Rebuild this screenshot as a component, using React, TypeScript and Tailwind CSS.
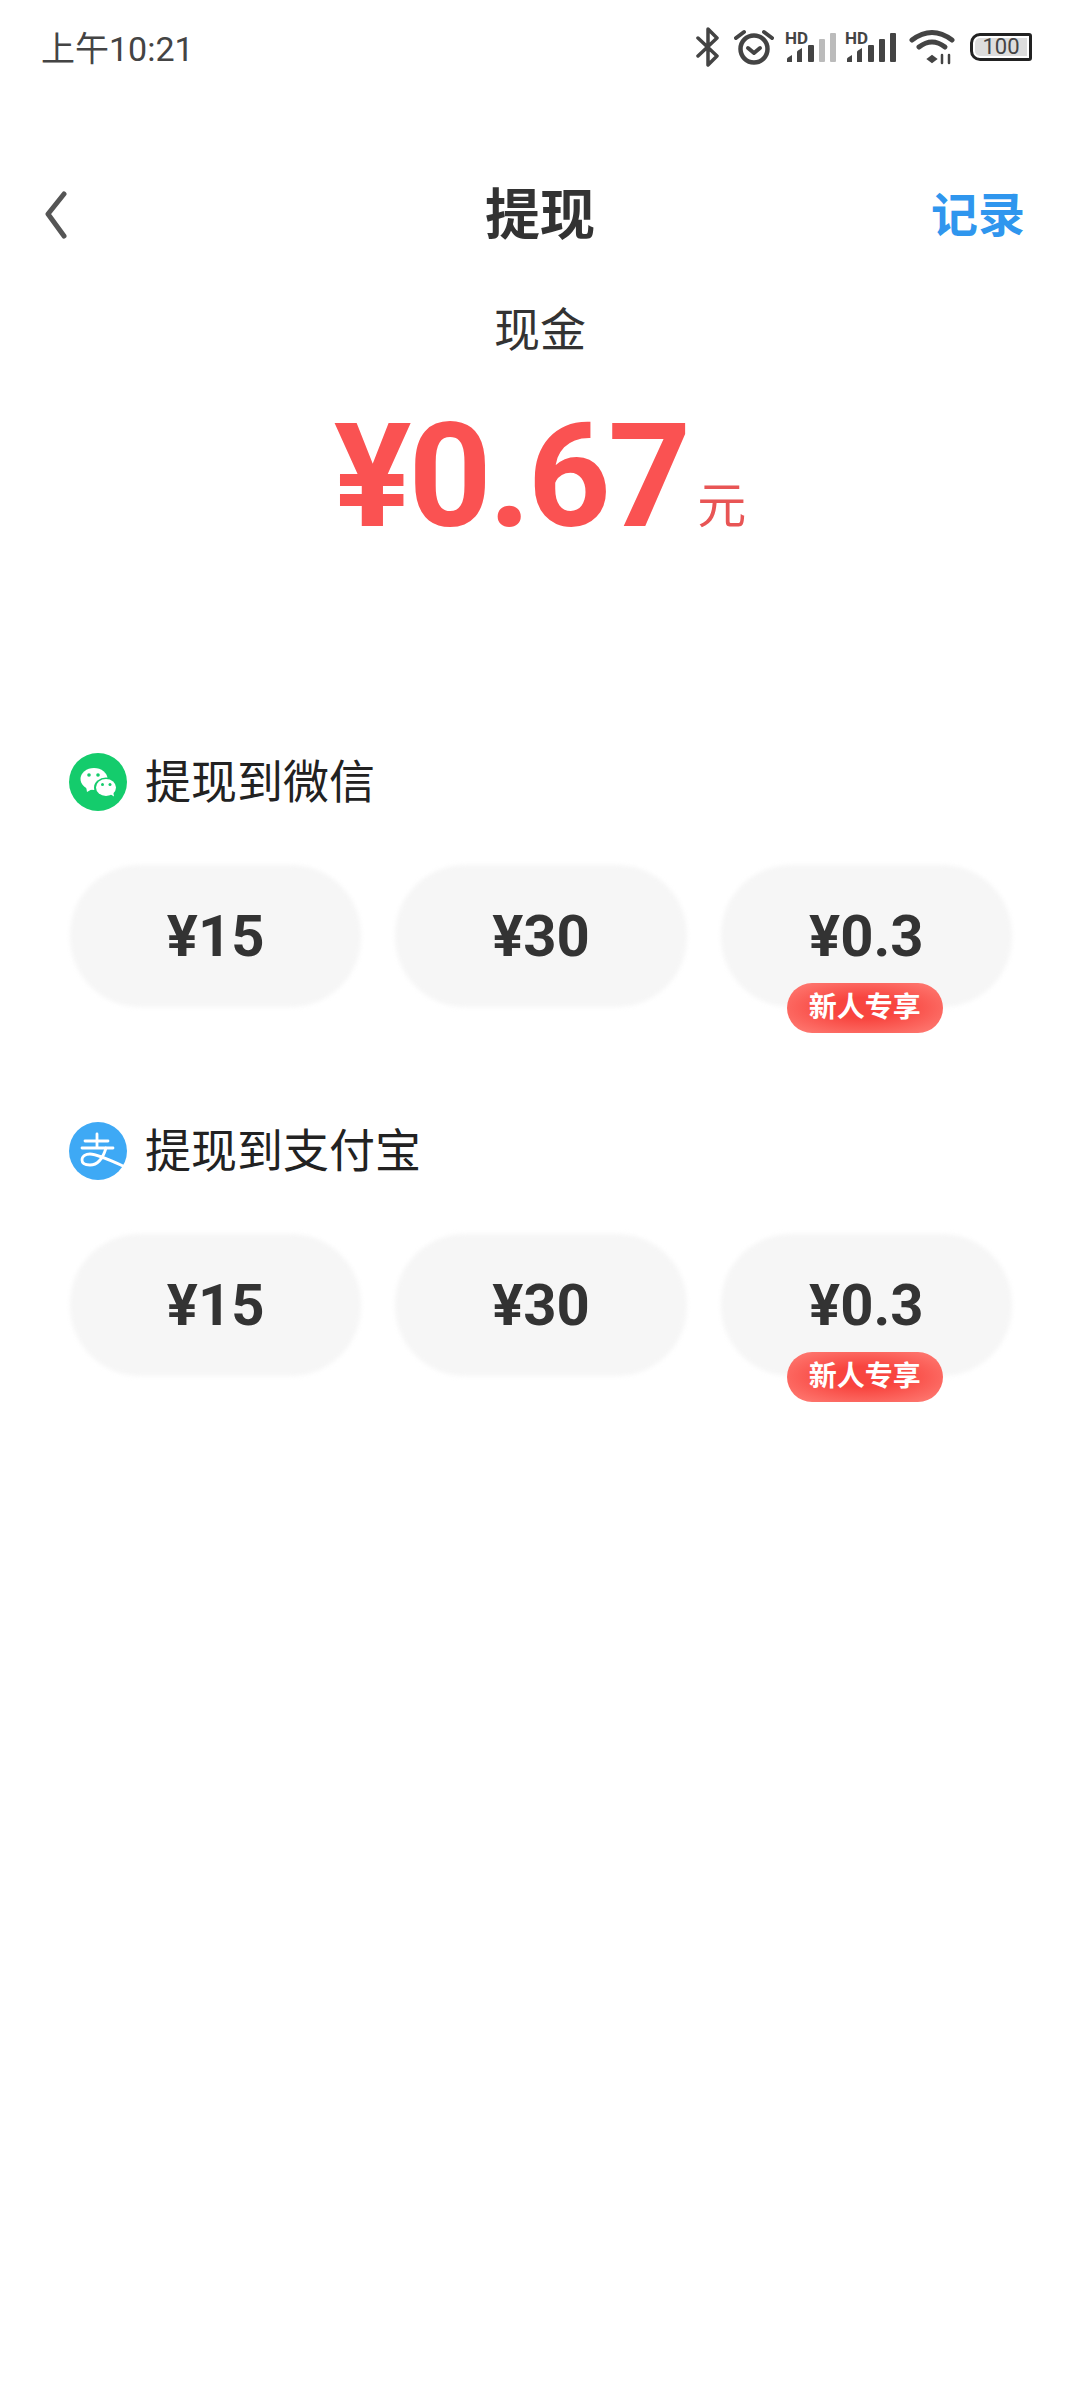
import React from 'react';

const FONT = 'font-[Roboto,"Noto_Sans_CJK_SC",sans-serif]';

const SignalIcon = ({ full }: { full: boolean }) => (
    <div className="relative w-[52px] h-[34px]">
        <span className="absolute left-0 -top-[2px] text-[17px] font-bold leading-[20px] text-[#444]">HD</span>
        <svg width="52" height="34" viewBox="0 0 52 34" fill="#444">
            <path d="M2 32v-3q0-1 1-1.500l4-2.500v7z" />
            <path d="M12 32v-10q0-1 1-1.500l4-2.500v14z" />
            <rect x="23" y="15" width="6" height="17" rx="1" />
            <rect x="34" y="9" width="6" height="23" rx="1" fill={full ? '#444' : '#bbb'} />
            <rect x="45" y="3" width="6" height="29" rx="1" fill={full ? '#444' : '#bbb'} />
        </svg>
    </div>
);

const StatusIcons = () => (
    <div className="flex items-center">
        <svg width="26" height="40" viewBox="0 0 26 40" fill="none" stroke="#444" strokeWidth="3.5" strokeLinecap="round" strokeLinejoin="round">
            <path d="M3 11l19 18-9 9V2l9 9L3 29" />
        </svg>
        <svg className="ml-[13px]" width="40" height="38" viewBox="0 0 40 38" fill="none" stroke="#444" strokeLinecap="round" strokeLinejoin="round">
            <circle cx="20" cy="21" r="13.500" strokeWidth="4.500" />
            <path d="M14 20l6 5 6-5" strokeWidth="4" />
            <path d="M2 10l8-6M38 10l-8-6" strokeWidth="4" />
        </svg>
        <div className="ml-[11px]"><SignalIcon full={false} /></div>
        <div className="ml-[8px]"><SignalIcon full={true} /></div>
        <svg className="ml-[12px]" width="46" height="36" viewBox="0 0 46 36" fill="none" stroke="#444" strokeWidth="5" strokeLinecap="round">
            <path d="M3 11q20-15 40 0" />
            <path d="M10 18q13-10 26 0" />
            <path d="M19 30l4-3 4 3-4 3z" fill="#444" strokeWidth="2" />
            <path d="M33 26v8M40 26v8" strokeWidth="2.500" />
        </svg>
        <div className="ml-[15px] w-[62px] h-[28px] border-[3px] border-[#222] rounded-l-[10px] rounded-r-[3px] p-[2px] flex">
            <div className="flex-1 bg-[#ddd] rounded-l-[5px] flex items-center justify-center text-[22px] leading-none text-[#444]">100</div>
        </div>
    </div>
);

const WechatLogo = () => (
    <svg width="58" height="58" viewBox="0 0 58 58">
        <circle cx="29" cy="29" r="29" fill="#14cc6c" />
        <ellipse cx="25" cy="26" rx="13.500" ry="11" fill="#fff" />
        <path d="M17 33l1 6 7-4z" fill="#fff" />
        <ellipse cx="37" cy="34.500" rx="12" ry="10" fill="#14cc6c" />
        <ellipse cx="37" cy="34.500" rx="10" ry="8.500" fill="#fff" />
        <path d="M41 41l4 2.500-1-6z" fill="#fff" />
        <circle cx="20" cy="22" r="1.800" fill="#14cc6c" />
        <circle cx="29" cy="22" r="1.800" fill="#14cc6c" />
        <circle cx="33.500" cy="31.500" r="1.500" fill="#14cc6c" />
        <circle cx="41" cy="31.500" r="1.500" fill="#14cc6c" />
    </svg>
);

const AlipayLogo = () => (
    <svg width="58" height="58" viewBox="0 0 58 58">
        <circle cx="29" cy="29" r="29" fill="#3ea9f5" />
        <g fill="none" stroke="#fff" strokeWidth="2.800" strokeLinecap="round" strokeLinejoin="round">
            <path d="M16 19h23" />
            <path d="M28 12v13" />
            <path d="M13 26h31" />
            <path d="M37 26q-5 17-16 17c-5 0-8-2-8-5 0-4 4-6 8-6 6 0 20 6 33 12" />
        </g>
    </svg>
);

const AmountPill = ({ amount, isNew }: { amount: string; isNew?: boolean }) => (
    <div className="relative flex-1 h-[142px] flex items-center justify-center">
        {/* soft edge like the compressed original */}
        <div className="absolute inset-0 rounded-[70px] bg-[#f6f6f6] blur-[2px]" />
        <span className="relative text-[58px] font-bold leading-none text-[#333]">{amount}</span>
        {isNew && (
            <span className="absolute left-[66px] top-[118px] w-[156px] h-[50px] rounded-full bg-[radial-gradient(ellipse_at_center,#f8453f_30%,#ff8078_100%)] flex items-center justify-center text-[28px] font-bold leading-none text-white">
                新人专享
            </span>
        )}
    </div>
);

const WithdrawSection = ({ logo, title }: { logo: React.ReactNode; title: string }) => (
    <section>
        <div className="flex items-center gap-[18px] h-[58px] -ml-[1px]">
            {logo}
            <h2 className="text-[46px] leading-none text-[#222]">{title}</h2>
        </div>
        <div className="flex gap-[34px] mt-[54px]">
            <AmountPill amount="¥15" />
            <AmountPill amount="¥30" />
            <AmountPill amount="¥0.3" isNew />
        </div>
    </section>
);

export default function App() {
    return (
        <div className={`${FONT} w-[1080px] h-[2400px] bg-white overflow-hidden`}>
            <div className="h-[94px] pl-[41px] pr-[48px] flex items-center justify-between">
                <span className="text-[34px] leading-none text-[#444] pt-[3px]">上午10:21</span>
                <StatusIcons />
            </div>

            <div className="mt-[61px] h-[120px] px-[44px] pr-[55px] relative flex items-center justify-between">
                <svg width="24" height="48" viewBox="0 0 24 48" fill="none" stroke="#555" strokeWidth="5" strokeLinecap="round" strokeLinejoin="round">
                    <path d="M20 3L4 23l16 22" />
                </svg>
                <h1 className="absolute left-0 right-0 text-center text-[55px] font-bold leading-none text-[#333]">提现</h1>
                <span className="text-[47px] font-bold leading-none text-[#2f96ee]">记录</span>
            </div>

            <div className="mt-[25px] h-[60px] flex items-center justify-center text-[46px] leading-none text-[#333]">现金</div>

            <div className="mt-[41px] flex items-baseline justify-center">
                <span className="text-[145px] font-bold leading-[150px] tracking-[-3px] text-[#fa5252]">¥0.67</span>
                <span className="ml-[9px] text-[49px] leading-none text-[#e85555] -translate-y-[3px]">元</span>
            </div>

            <div className="mt-[202px] pl-[70px] pr-[68px] flex flex-col gap-[115px]">
                <WithdrawSection logo={<WechatLogo />} title="提现到微信" />
                <WithdrawSection logo={<AlipayLogo />} title="提现到支付宝" />
            </div>
        </div>
    );
}
